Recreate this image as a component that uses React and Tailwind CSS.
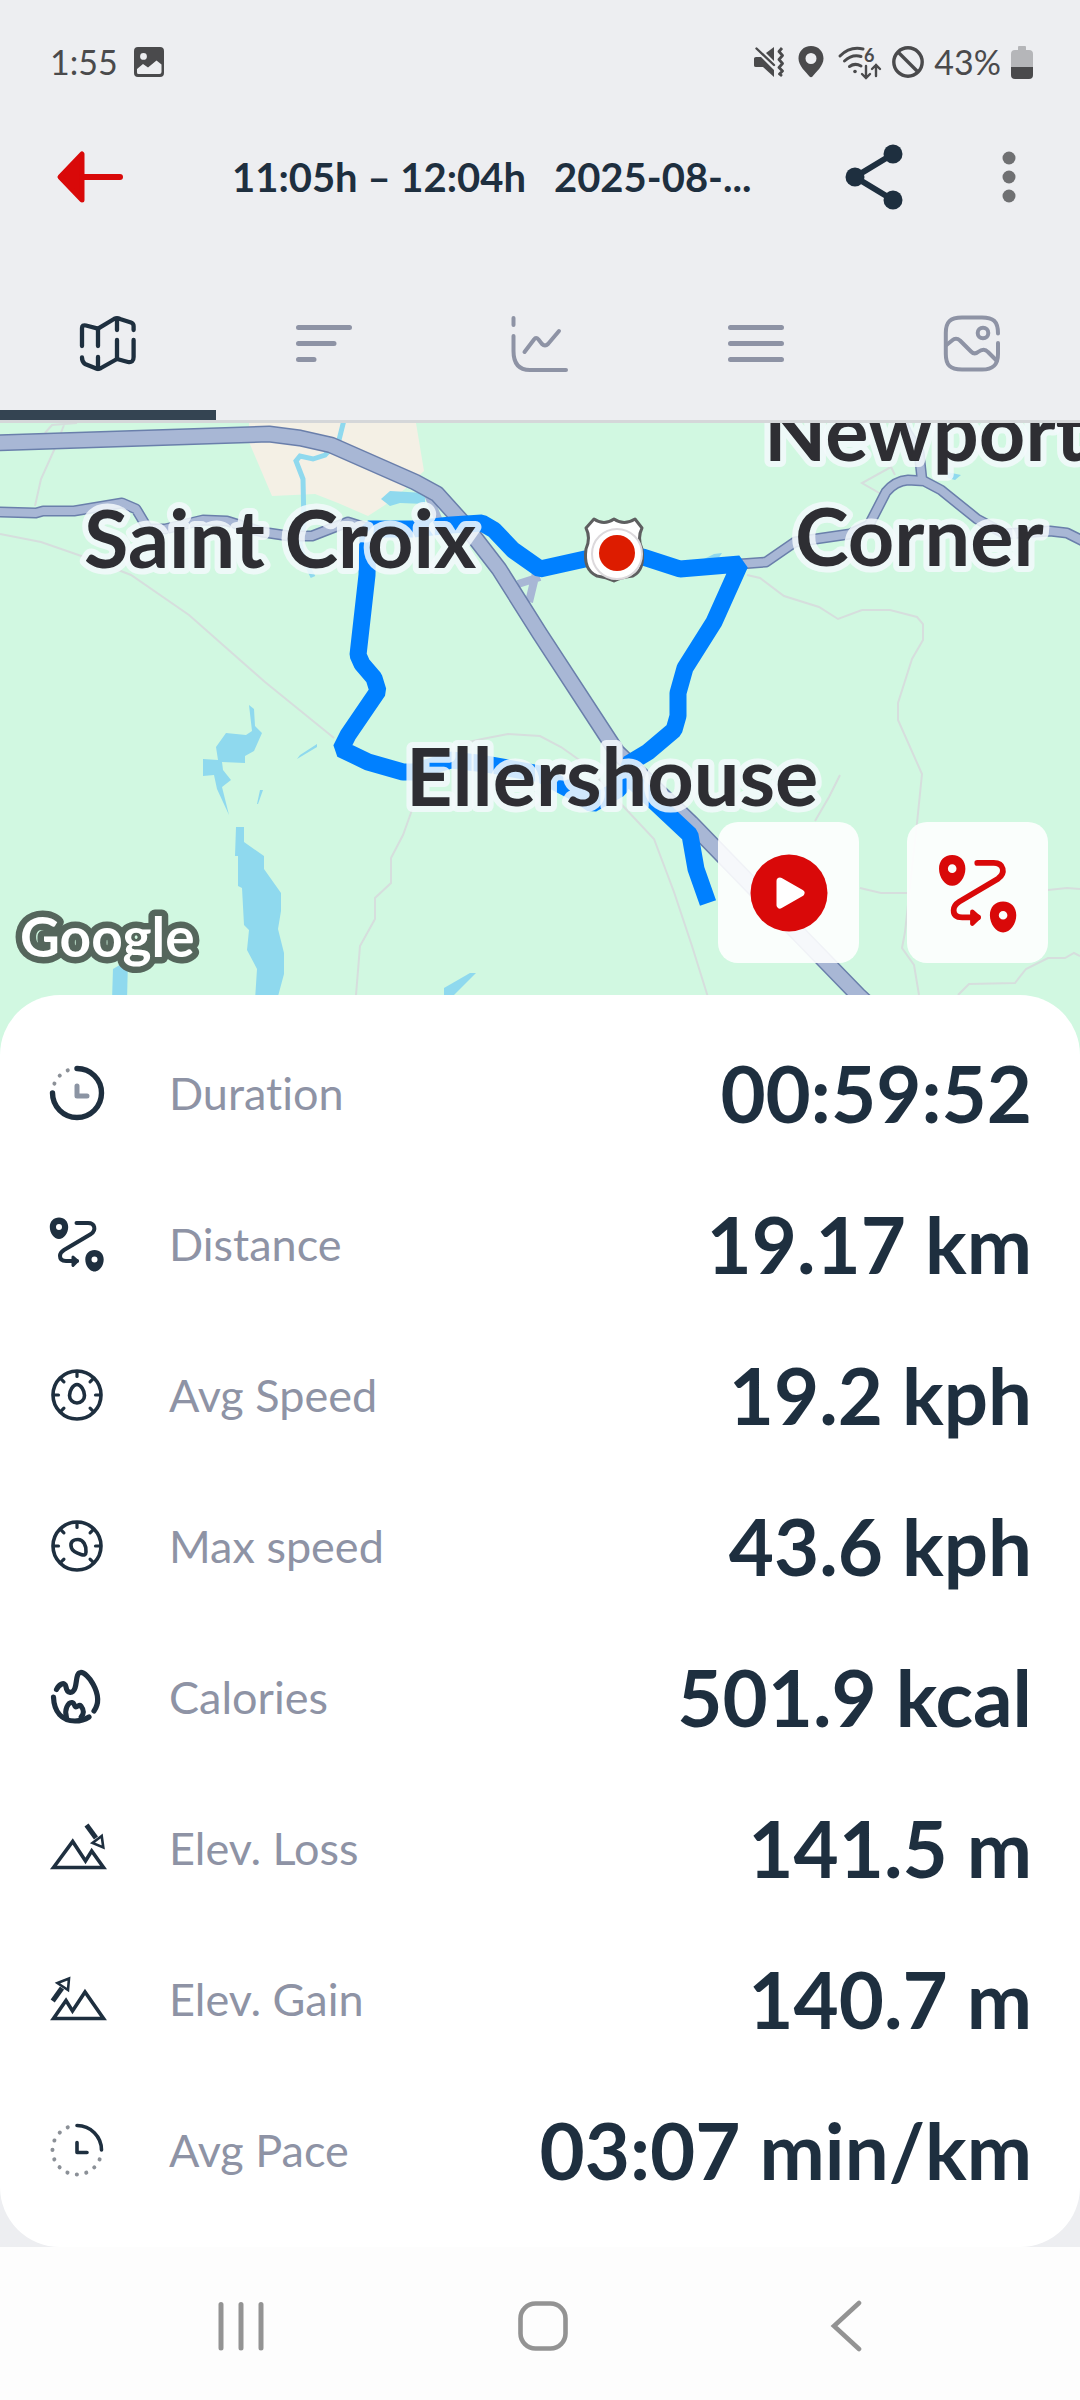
import React, { useState } from "react";

const NAVY = "#1e2f3f";

/* ---------- status bar ---------- */

function StatusBar() {
  return (
    <div className="flex h-[124px] items-center justify-between pl-[50px] pr-[47px] text-[34px] leading-[40px] text-[#4a4a4c]">
      <div className="flex items-center gap-4">
        <span>1:55</span>
        <svg width="30" height="32" viewBox="0 0 30 32" aria-hidden="true">
          <path fillRule="evenodd" fill="currentColor" d="M4 1H26a4 4 0 0 1 4 4V27a4 4 0 0 1-4 4H4a4 4 0 0 1-4-4V5a4 4 0 0 1 4-4ZM9.500 7a3.400 3.400 0 1 0 0 6.800a3.400 3.400 0 0 0 0-6.800ZM3 23V26.500Q3 28 4.500 28H25.500Q27.500 28 27.500 26V18.500L22.500 14.500L14 21.500L9 18Z" />
        </svg>
      </div>
      <div className="flex items-center gap-[10px]">
        <svg className="mr-1" width="30" height="32" viewBox="0 0 30 32" fill="currentColor" aria-hidden="true">
          <path d="M0 12.500Q0 11 2 11H7L20 24V31L9 21H2Q0 21 0 19.500Z" />
          <path d="M12 7L20 1V15Z" />
          <path d="M2.500 2.500L20 19" stroke="currentColor" strokeWidth="2.400" strokeLinecap="round" />
          <path d="M28 2L25 5.500L28.500 9.500L25 13.500L28.500 17.500L25 21.500L28.500 25L25.500 28L28 30" fill="none" stroke="currentColor" strokeWidth="2.800" strokeLinejoin="round" />
        </svg>
        <svg className="mr-1" width="26" height="32" viewBox="0 0 26 32" aria-hidden="true">
          <path fillRule="evenodd" fill="currentColor" d="M13 0C5.500 0 .5 5.500 .5 12.500C.5 20 8 26 11.500 30.500Q13 32 14.500 30.500C18 26 25.500 20 25.500 12.500C25.500 5.500 20.500 0 13 0ZM13 7a5.500 5.500 0 1 1 0 11a5.500 5.500 0 0 1 0-11Z" />
        </svg>
        <svg className="overflow-visible" width="44" height="34" viewBox="0 0 44 34" fill="none" stroke="currentColor" strokeWidth="3" strokeLinecap="round" aria-hidden="true">
          <path d="M2 11Q12 1 25 4" />
          <path d="M6.500 16Q14 9 23 11.500" />
          <path d="M11.500 21.500Q17 17.500 23 21" />
          <circle cx="17" cy="26.500" r="1.800" fill="currentColor" stroke="none" />
          <text x="26" y="17" fontSize="18" fontWeight="700" fill="currentColor" stroke="none">6</text>
          <path strokeWidth="2.400" d="M28 21V33M24 29L28 33L32 29M38 31V20M34 24L38 20L42 24" />
        </svg>
        <svg width="32" height="34" viewBox="0 0 32 34" fill="none" stroke="currentColor" strokeWidth="3.400" aria-hidden="true">
          <circle cx="16" cy="17" r="14.200" />
          <path d="M6 7L26 27" />
        </svg>
        <span>43%</span>
        <svg width="22" height="34" viewBox="0 0 22 34" aria-hidden="true">
          <path fill="#b5b6b9" d="M7 2Q7 1 8 1H14Q15 1 15 2V5H18Q22 5 22 9V22H0V9Q0 5 4 5H7Z" />
          <path fill="currentColor" d="M0 22H22V30Q22 34 18 34H4Q0 34 0 30Z" />
        </svg>
      </div>
    </div>
  );
}

/* ---------- toolbar ---------- */

function Toolbar() {
  return (
    <div className="mb-9 flex h-[106px] items-center px-14">
      <button type="button" aria-label="Back" className="shrink-0 text-[#d90909]">
        <svg width="68" height="56" viewBox="0 0 68 56">
          <path d="M4 28L26 5V51Z" fill="currentColor" stroke="currentColor" strokeWidth="5" strokeLinejoin="round" />
          <path d="M26 28H64" stroke="currentColor" strokeWidth="6" strokeLinecap="round" />
        </svg>
      </button>
      <h1 className="ml-[108px] flex min-w-0 flex-1 gap-7 whitespace-nowrap text-[40px] font-bold leading-[48px] text-[#1e2f3f]">
        <span>11:05h – 12:04h</span>
        <span>2025-08-...</span>
      </h1>
      <button type="button" aria-label="Share" className="shrink-0 text-[#1e2f3f]">
        <svg width="60" height="66" viewBox="0 0 60 66" fill="currentColor">
          <path d="M49 10L11 33L49 56" fill="none" stroke="currentColor" strokeWidth="6" />
          <circle cx="49" cy="10" r="9.500" />
          <circle cx="11" cy="33" r="9.500" />
          <circle cx="49" cy="56" r="9.500" />
        </svg>
      </button>
      <button type="button" aria-label="More options" className="ml-[90px] shrink-0 text-[#6f7072]">
        <svg width="30" height="60" viewBox="0 0 30 60" fill="currentColor">
          <circle cx="15" cy="11" r="6.500" />
          <circle cx="15" cy="30" r="6.500" />
          <circle cx="15" cy="49" r="6.500" />
        </svg>
      </button>
    </div>
  );
}

/* ---------- tabs ---------- */

function TabIcon({ children }) {
  return (
    <svg width="60" height="60" viewBox="0 0 60 60" fill="none" stroke="currentColor" strokeWidth="4.300" strokeLinecap="round" strokeLinejoin="round" aria-hidden="true">
      {children}
    </svg>
  );
}

const tabs = [
  {
    name: "Map",
    icon: (
      <>
        <path d="M4 33V15Q4 11.500 8 12.500L20 15.700L36 6Q39 4.500 42 6L53 9.500Q55.600 10.500 55.600 13V17" />
        <path d="M4 44.500Q4 49 7 51L17 55Q20 56.500 23 55L39 46L50 49Q55.600 50 55.600 44V27" />
        <path d="M20 16V33M20 44V56M39 6V17M39 27V46" />
      </>
    ),
  },
  { name: "Laps", icon: <path strokeWidth="5" d="M4.500 14.500H55.500M4.500 30.500H40M4.500 46.500H20" /> },
  {
    name: "Charts",
    icon: (
      <>
        <path strokeWidth="4" d="M3.500 5V12M3.500 23V38Q3.500 57 20 57H56" />
        <path strokeWidth="4" d="M14.500 39L24 26.500Q26 23.500 28.500 26.500L32 31Q35 34 38 31L49 18" />
      </>
    ),
  },
  { name: "Details", icon: <path strokeWidth="5" d="M4.500 14.500H55.500M4.500 30.500H55.500M4.500 46.500H55.500" /> },
  {
    name: "Photos",
    icon: (
      <>
        <path strokeWidth="4" d="M56 20.500C56 8 51 4.500 40 4.500H20C8 4.500 3.800 9 3.800 20V41C3.800 52 8 56.500 20 56.500H40C51 56.500 56 52 56 41V30" />
        <circle strokeWidth="4" cx="41" cy="20" r="5.300" />
        <path strokeWidth="4" d="M4.500 32L10 27.500Q14 24 18 27.500L29 38.500Q32.500 42 36 39Q42 34.500 46 39L54 47" />
      </>
    ),
  },
];

function Tabs() {
  const [active, setActive] = useState("Map");
  return (
    <div role="tablist" className="grid grid-cols-5 border-b-[3px] border-[#d5d7d9]">
      {tabs.map((tab) => (
        <button
          key={tab.name}
          type="button"
          role="tab"
          aria-label={tab.name}
          aria-selected={active === tab.name}
          onClick={() => setActive(tab.name)}
          className={
            active === tab.name
              ? "flex h-[154px] flex-col items-center justify-between pt-[47px] text-[#1e2f3f]"
              : "flex h-[154px] flex-col items-center justify-between pt-[47px] text-[#8e93a5]"
          }
        >
          <TabIcon>{tab.icon}</TabIcon>
          {active === tab.name && <span className="h-[10px] w-full bg-[#344452]" />}
        </button>
      ))}
    </div>
  );
}

/* ---------- map ---------- */

const highway = "M-5 443L269 434L300 438L331 445L415 482L437 494L465 525L499 569L540 634L617 752L691 823L858 995L885 1020";
const roads = [
  "M-5 512L36 513L43 511H74L122 503L136 509L148 529H165L203 520L227 521L262 532L289 536H312L348 522L370 529",
  "M740 564L766 562L795 542L850 534L869 525L886 492Q895 481 908 480L924 481L941 490L977 519L1005 534L1050 531L1067 533L1085 542",
  "M922 480L919 452L907 433L899 415",
];
const lanes = [
  "M0 534L41 542L90 559L131 575L189 615L265 682L334 738",
  "M77 423L52 425L45 433M64 425L55 448L41 479L35 506",
  "M460 744L482 739L508 734L540 736L561 747L585 764L623 806L654 839L674 892L692 946L712 1010",
  "M412 810L403 835L391 858V883L375 898V919L360 946L356 995",
  "M747 575L760 578L784 596L819 607L838 619L862 610H890L917 617L923 624V640L912 659L898 703V720L922 774L917 823L905 932L902 948L914 965L919 995",
  "M840 775L829 797L815 821",
  "M860 888L881 893H907M1048 890L1067 888L1080 889",
  "M958 995L969 984L1015 983L1026 969L1048 958H1065L1074 953L1080 956",
  "M881 494L862 483L891 467L895 475",
];
const lakes = [
  "M249 705L254 709L255 726L262 733L254 751L245 756V763L222 762L223 770L231 780L222 787L229 815L217 789L214 775L203 776V759L218 760L216 747L226 733L246 735L252 731Z",
  "M236 827H244V842L264 856V869L281 893V911L278 929L284 953V974L277 1000H255L257 969L247 950L249 930L244 925L242 888L238 886V856H235Z",
  "M381 499L390 491L425 493V504L400 503L390 506Z",
  "M297 759L300 755L317 744V747ZM257 804L260 790H263L258 804Z",
  "M113 969L128 960L127 1000H112Z",
  "M444 988L470 973H476L453 996H444Z",
  "M704 559L714 554L722 553L718 559ZM947 472L961 475L955 480L948 478Z",
];
const route =
  "M708 903L696 869L690 835L657 804L634 782L628 764L648 752L674 730L678 716V693L685 668L714 622L740 564L680 569L643 557L585 559L540 569L513 550L494 530L482 523L451 525L413 529H368L367 575L358 655L362 664L374 678L378 691L348 735L341 749L368 762L403 772H413L451 760L486 764L540 774L576 793L592 804L619 789L630 766";

function PlaceLabel({ x, y, children }) {
  return (
    <text
      x={x}
      y={y}
      fontSize="81"
      fontWeight="700"
      fill="#2e2e33"
      stroke="#f3f9fb"
      strokeOpacity="0.85"
      strokeWidth="12"
      strokeLinejoin="round"
      paintOrder="stroke"
    >
      {children}
    </text>
  );
}

function RideMap() {
  return (
    <svg className="block w-full" viewBox="0 423 1080 632" role="img" aria-label="Ride route">
      <rect y="423" width="1080" height="632" fill="#d1f8e1" />
      <path d="M249 423H416L424 471L405 489L385 505L368 516L338 503L315 494L272 496L249 442Z" fill="#f4f0e5" />
      {lanes.map((d) => (
        <path key={d} d={d} fill="none" stroke="#d6dedd" strokeWidth="2" />
      ))}
      {lakes.map((d) => (
        <path key={d} d={d} fill="#8fd9ee" />
      ))}
      <path d="M344 420L339 440L325 455L313 459L300 456L296 461L303 479L304 525L300 544L305 561L313 577" fill="none" stroke="#8fd9ee" strokeWidth="5" />
      <path d="M427 492L439 521M518 584L540 577M536 573L529 602" fill="none" stroke="#a8b7d5" strokeWidth="8" />
      {roads.map((d) => (
        <path key={d} d={d} fill="none" stroke="#6a7fab" strokeWidth="11" strokeLinejoin="round" />
      ))}
      {roads.map((d) => (
        <path key={d} d={d} fill="none" stroke="#a8b7d5" strokeWidth="8" strokeLinejoin="round" />
      ))}
      <path d={highway} fill="none" stroke="#6a7fab" strokeWidth="17" strokeLinejoin="round" />
      <path d={highway} fill="none" stroke="#a8b7d5" strokeWidth="14" strokeLinejoin="round" />
      <path d={route} fill="none" stroke="#0080ff" strokeWidth="17" strokeLinejoin="bevel" />

      <PlaceLabel x="764" y="461">Newport</PlaceLabel>
      <PlaceLabel x="795" y="566">Corner</PlaceLabel>
      <PlaceLabel x="84" y="568">Saint Croix</PlaceLabel>
      <PlaceLabel x="406" y="806">Ellershouse</PlaceLabel>

      {/* road shield with the position marker on top */}
      <path d="M594 519Q604 526 614 519Q624 526 635 519L642 528Q637 538 642 549Q645 570 633 576Q622 577 614 581Q606 577 597 576Q583 570 586 549Q591 538 586 528Z" fill="#fff" stroke="#5e5f60" strokeWidth="3" strokeLinejoin="round" />
      <circle cx="617" cy="554" r="25" fill="#fff" stroke="#dcd9dc" strokeWidth="2" />
      <circle cx="617" cy="553" r="18" fill="#dd1c00" />

      <text x="20" y="957" fontSize="55" fontWeight="700" fill="#fff" stroke="#55665c" strokeWidth="13" strokeLinejoin="round" paintOrder="stroke">
        Google
      </text>
    </svg>
  );
}

function RouteGlyph({ size }) {
  return (
    <svg width={size} height={size} viewBox="0 0 60 60" fill="none" stroke="currentColor" strokeWidth="4" strokeLinecap="round" strokeLinejoin="round" aria-hidden="true">
      <path fillRule="evenodd" fill="currentColor" stroke="none" d="M12 3.500C6.500 3.500 2.800 7.500 2.800 13C2.800 19 7 25 12 25C17 25 21.200 19 21.200 13C21.200 7.500 17.500 3.500 12 3.500ZM12 10a3 3 0 1 1 0 6a3 3 0 0 1 0-6Z" />
      <path fillRule="evenodd" fill="currentColor" stroke="none" d="M47.500 36C42 36 38.300 40 38.300 45.500C38.300 51.500 42.500 57.500 47.500 57.500C52.500 57.500 56.700 51.500 56.700 45.500C56.700 40 53 36 47.500 36ZM47.500 42.500a3 3 0 1 1 0 6a3 3 0 0 1 0-6Z" />
      <path d="M29.500 9H41C48 9 49.500 16 44 20L17 36Q13 38.500 13 42Q13 47 19 47H30" />
      <path fill="currentColor" strokeWidth="3" d="M26 43L30.500 47L26 51.500Z" />
    </svg>
  );
}

function MapPanel() {
  return (
    <section className="relative">
      <RideMap />
      <div className="absolute bottom-[92px] right-8 flex gap-12">
        <button type="button" aria-label="Play route" className="flex size-[141px] items-center justify-center rounded-[20px] bg-white/90 text-[#d90909]">
          <svg width="78" height="78" viewBox="0 0 78 78">
            <circle cx="39" cy="39" r="38.500" fill="currentColor" />
            <path d="M30 27L51 39L30 51Z" fill="#fff" stroke="#fff" strokeWidth="7" strokeLinejoin="round" />
          </svg>
        </button>
        <button type="button" aria-label="Show route" className="flex size-[141px] items-center justify-center rounded-[20px] bg-white/90 text-[#d90909]">
          <RouteGlyph size={86} />
        </button>
      </div>
    </section>
  );
}

/* ---------- stats ---------- */

function Glyph({ children }) {
  return (
    <svg width="60" height="60" viewBox="0 0 60 60" fill="none" stroke={NAVY} strokeWidth="3.600" strokeLinecap="round" strokeLinejoin="round" aria-hidden="true">
      {children}
    </svg>
  );
}

function Gauge({ children }) {
  return (
    <Glyph>
      <circle cx="30" cy="30" r="24" />
      {[0, 45, 90, 135, 225, 270, 315].map((a) => (
        <path key={a} d="M30 7V11.500" strokeWidth="3.200" transform={`rotate(${a} 30 30)`} />
      ))}
      {children}
    </Glyph>
  );
}

const stats = [
  {
    label: "Duration",
    value: "00:59:52",
    icon: (
      <Glyph>
        <path d="M30 5.500A24.500 24.500 0 1 1 5.500 30" strokeWidth="5.400" />
        <path d="M7.400 20.600A24.500 24.500 0 0 1 23 6.500" stroke="#8b9097" strokeWidth="4" strokeDasharray="0.1 9.500" />
        <path d="M30 23V33H40" stroke="#8b94a3" strokeWidth="5" />
      </Glyph>
    ),
  },
  { label: "Distance", value: "19.17 km", icon: <RouteGlyph size={60} /> },
  {
    label: "Avg Speed",
    value: "19.2 kph",
    icon: (
      <Gauge>
        <path d="M30 19.500C26 19.500 22.500 26 22.500 30.500A7.500 7.500 0 0 0 37.500 30.500C37.500 26 34 19.500 30 19.500Z" />
      </Gauge>
    ),
  },
  {
    label: "Max speed",
    value: "43.6 kph",
    icon: (
      <Gauge>
        <path d="M24.500 32C22.500 26 26 23.500 31 23.500C36.500 23.500 39.500 30 39 36C39 39 37 39.500 34 38.500C29.500 37 25.500 35.500 24.500 32Z" />
      </Gauge>
    ),
  },
  {
    label: "Calories",
    value: "501.9 kcal",
    icon: (
      <Glyph>
        <path strokeWidth="5.200" d="M9.500 22.500C12 17 18 14 19 20C20 27 26 27 28 21C30 15 29 6 33.500 5.500C37 5 43 11 46 17C52 28 52 37 47 44" />
        <path strokeWidth="5.200" d="M6.500 30C7 45 15 54 28 54Q36 54 42 50" />
        <path strokeWidth="5" d="M19.500 50C17 43 21 35 25 35.500C28 36 27 40 29 40C31 40 32 37 34 39C37 43 37 47 34 50" />
      </Glyph>
    ),
  },
  {
    label: "Elev. Loss",
    value: "141.5 m",
    icon: (
      <Glyph>
        <path strokeLinecap="butt" strokeLinejoin="miter" d="M6.500 49.500L25.700 23.500L38.500 43L44.700 33L56.500 49.500Z" />
        <path strokeLinecap="butt" strokeWidth="5" d="M39.500 7L49 20" />
        <path strokeLinejoin="miter" strokeWidth="2.600" fill="#fff" d="M54.700 18L45.500 25L56.300 29.500Z" />
      </Glyph>
    ),
  },
  {
    label: "Elev. Gain",
    value: "140.7 m",
    icon: (
      <Glyph>
        <path strokeLinecap="butt" strokeLinejoin="miter" d="M6.500 49.500L19 31.500L25.500 42L38 23L56.500 49.500Z" />
        <path strokeLinecap="butt" strokeWidth="5" d="M5.700 32L15 19" />
        <path strokeLinejoin="miter" strokeWidth="2.600" fill="#fff" d="M10.500 14L22 9.500L21 21Z" />
      </Glyph>
    ),
  },
  {
    label: "Avg Pace",
    value: "03:07 min/km",
    icon: (
      <Glyph>
        <path d="M30 5.500A24.500 24.500 0 0 1 54.500 30" />
        <path d="M52.600 39.400A24.500 24.500 0 1 1 21 7.200" stroke="#8b9097" strokeWidth="4" strokeDasharray="0.1 9.500" />
        <path d="M30 22.500V32.500H40" />
      </Glyph>
    ),
  },
];

function StatsCard() {
  return (
    <dl className="relative z-10 -mt-[60px] rounded-[60px] bg-white py-[22px] pl-[47px] pr-12">
      {stats.map((stat) => (
        <div key={stat.label} className="flex h-[151px] items-center">
          <dt className="flex items-center gap-[62px] text-[45px] leading-[52px] text-[#8e93a5] [font-variant-ligatures:none]">
            <span className="text-[#1e2f3f]">{stat.icon}</span>
            {stat.label}
          </dt>
          <dd className="ml-auto whitespace-nowrap text-[78px] font-bold leading-[96px] text-[#1e2f3f]">{stat.value}</dd>
        </div>
      ))}
    </dl>
  );
}

/* ---------- system navigation ---------- */

function NavBar() {
  return (
    <nav className="grid h-[153px] grid-cols-3 place-items-center bg-[#fdfdfd] pl-[90px] pr-[84px] pt-1 text-[#939393]">
      <button type="button" aria-label="Recent apps">
        <svg width="50" height="54" viewBox="0 0 50 54" fill="none" stroke="currentColor" strokeWidth="5" strokeLinecap="round">
          <path d="M5 5.500V49M25 5.500V49M45 5.500V49" />
        </svg>
      </button>
      <button type="button" aria-label="Home">
        <svg width="54" height="54" viewBox="0 0 54 54" fill="none" stroke="currentColor" strokeWidth="4.600">
          <rect x="4.500" y="4.500" width="45" height="45" rx="15" />
        </svg>
      </button>
      <button type="button" aria-label="Back">
        <svg width="34" height="54" viewBox="0 0 34 54" fill="none" stroke="currentColor" strokeWidth="4.600" strokeLinecap="round">
          <path d="M31 4L6 27L31 50" />
        </svg>
      </button>
    </nav>
  );
}

function App() {
  return (
    <div className="min-h-screen bg-[#edeef1] font-['Lato',sans-serif]">
      <header>
        <StatusBar />
        <Toolbar />
        <Tabs />
      </header>
      <main>
        <MapPanel />
        <StatsCard />
      </main>
      <NavBar />
    </div>
  );
}

export default App;
